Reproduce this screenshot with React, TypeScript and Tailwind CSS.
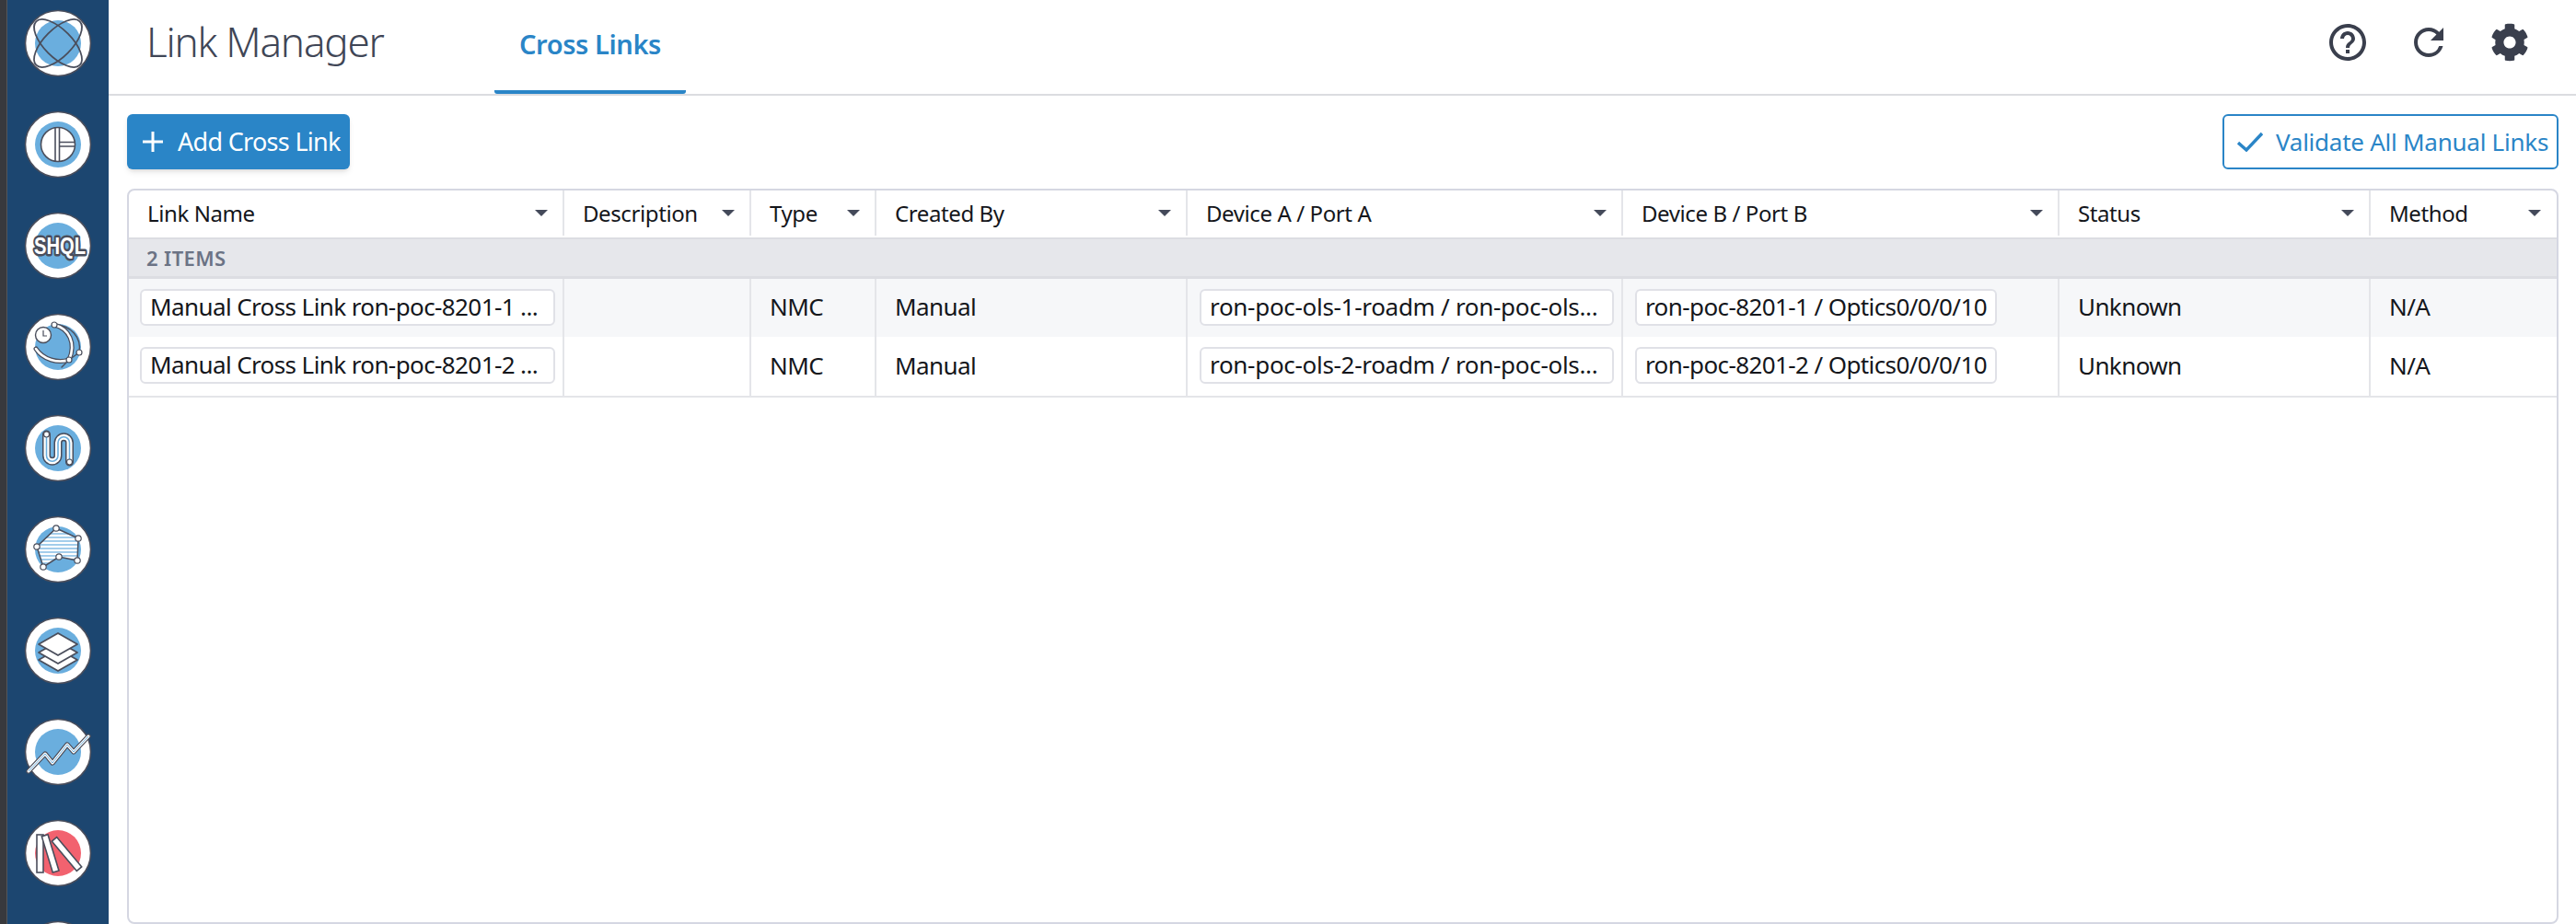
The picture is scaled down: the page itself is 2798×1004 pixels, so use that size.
import { FaCog } from "react-icons/fa"
import { MdHelpOutline, MdRefresh } from "react-icons/md"
import type { ReactNode } from "react"

const DARK = "#4a4e5c"
const BLUE = "#6aaede"

const COLUMNS = [
  "Link Name",
  "Description",
  "Type",
  "Created By",
  "Device A / Port A",
  "Device B / Port B",
  "Status",
  "Method",
]

const ROWS = [
  {
    name: "Manual Cross Link ron-poc-8201-1 ...",
    type: "NMC",
    by: "Manual",
    a: "ron-poc-ols-1-roadm / ron-poc-ols...",
    b: "ron-poc-8201-1 / Optics0/0/0/10",
    status: "Unknown",
    method: "N/A",
  },
  {
    name: "Manual Cross Link ron-poc-8201-2 ...",
    type: "NMC",
    by: "Manual",
    a: "ron-poc-ols-2-roadm / ron-poc-ols...",
    b: "ron-poc-8201-2 / Optics0/0/0/10",
    status: "Unknown",
    method: "N/A",
  },
]

function Badge({ children, fill = BLUE, r = 25 }: { children?: ReactNode; fill?: string; r?: number }) {
  return (
    <svg viewBox="-38 -38 76 76" className="w-[76px] h-[76px] shrink-0 overflow-visible">
      <circle r="35.5" fill="#fff" stroke={DARK} strokeWidth="1.6" />
      <circle r={r} fill={fill} />
      {children}
    </svg>
  )
}

function NavIcons() {
  return (
    <>
      <Badge>
        <g fill="none" stroke={DARK} strokeWidth="1.8">
          <ellipse rx="33.5" ry="15" transform="rotate(45)" />
          <ellipse rx="33.5" ry="15" transform="rotate(-45)" />
        </g>
      </Badge>
      <Badge>
        <circle r="18.5" fill="#fff" stroke={DARK} strokeWidth="1.6" />
        <path d="M-3 -18 V18 M1.5 -18 V18 M1.5 -2.5 H18 M1.5 2 H18" stroke={DARK} strokeWidth="1.6" fill="none" />
      </Badge>
      <Badge>
        <path d="M9 10 L14 16 L19 10 Z" fill={DARK} />
        <text
          x="2"
          y="9"
          textAnchor="middle"
          fontFamily="'Liberation Sans', sans-serif"
          fontWeight="700"
          fontSize="25"
          textLength="56"
          lengthAdjust="spacingAndGlyphs"
          fill="#fff"
          stroke={DARK}
          strokeWidth="5"
          strokeLinejoin="round"
          paintOrder="stroke"
        >
          SHQL
        </text>
      </Badge>
      <Badge>
        <g fill="none" strokeLinecap="round">
          <path d="M-4 -24 C14 -24 26 -10 23 6" stroke={DARK} strokeWidth="1.4" />
          <path d="M23 6 L12 14 L4 22" stroke={DARK} strokeWidth="1.4" />
          <path d="M-4 -24 C12 -20 20 -4 12 14" stroke={DARK} strokeWidth="5" />
          <path d="M-4 -24 C12 -20 20 -4 12 14" stroke="#fff" strokeWidth="2.6" />
          <path d="M-24 2 C-16 14 0 18 12 14" stroke={DARK} strokeWidth="5" />
          <path d="M-24 2 C-16 14 0 18 12 14" stroke="#fff" strokeWidth="2.6" />
        </g>
        <circle cx="-16" cy="-13" r="8.5" fill="#fff" stroke={DARK} strokeWidth="1.4" />
        <path d="M-16 -18 V-12 H-12" fill="none" stroke={DARK} strokeWidth="1.2" />
        <circle cx="-4" cy="-24" r="3" fill="#fff" stroke={DARK} strokeWidth="1.2" />
        <circle cx="23" cy="6" r="3" fill="#fff" stroke={DARK} strokeWidth="1.2" />
        <circle cx="12" cy="14" r="3" fill="#fff" stroke={DARK} strokeWidth="1.2" />
      </Badge>
      <Badge>
        <g fill="none" strokeLinecap="round">
          <path d="M-12.5 -15 V8 a6.25 6.25 0 0 0 12.5 0 V-6 a6.25 6.25 0 0 1 12.5 0 V15" stroke={DARK} strokeWidth="9" />
          <path d="M-12.5 -15 V8 a6.25 6.25 0 0 0 12.5 0 V-6 a6.25 6.25 0 0 1 12.5 0 V15" stroke="#fff" strokeWidth="6" />
          <path d="M-12.5 -15 V8 a6.25 6.25 0 0 0 12.5 0 V-6 a6.25 6.25 0 0 1 12.5 0 V15" stroke={BLUE} strokeWidth="1.6" />
        </g>
        <circle cx="-12.5" cy="-15" r="3" fill="#fff" stroke={DARK} strokeWidth="1.2" />
        <circle cx="12.5" cy="15" r="3" fill="#fff" stroke={DARK} strokeWidth="1.2" />
      </Badge>
      <Badge>
        <defs>
          <pattern id="stripes" width="4" height="4" patternUnits="userSpaceOnUse">
            <rect width="4" height="2.2" fill="#fff" />
            <rect y="2.2" width="4" height="1.8" fill="#a6cfec" />
          </pattern>
        </defs>
        <path d="M-2 -23 L22 -12 L21 12 L1 8 L-16 19 L-23 -3 Z" fill="url(#stripes)" stroke={DARK} strokeWidth="1.5" />
        {[[-2, -23], [22, -12], [21, 12], [1, 8], [-16, 19], [-23, -3]].map(([x, y]) => (
          <circle key={`${x}${y}`} cx={x} cy={y} r="3.2" fill="#fff" stroke={DARK} strokeWidth="1.2" />
        ))}
      </Badge>
      <Badge>
        <g fill="#fff" stroke={DARK} strokeWidth="1.8" strokeLinejoin="round">
          <path d="M0 -2 L21 10 L0 22 L-21 10 Z" />
          <path d="M0 -10 L21 2 L0 14 L-21 2 Z" />
          <path d="M0 -19 L21 -7 L0 5 L-21 -7 Z" />
        </g>
      </Badge>
      <Badge>
        <path d="M-32 21 L-14 2 L-6 12 L10 -8 L17 0 L33 -17" fill="none" stroke={DARK} strokeWidth="5.4" strokeLinecap="round" strokeLinejoin="round" />
        <path d="M-32 21 L-14 2 L-6 12 L10 -8 L17 0 L33 -17" fill="none" stroke="#fff" strokeWidth="3" strokeLinecap="round" strokeLinejoin="round" />
        <path d="M-32 21 L-14 2 L-6 12 L10 -8 L17 0 L33 -17" fill="none" stroke={BLUE} strokeWidth="1" />
      </Badge>
      <Badge fill="#f2626f">
        <g fill="#fff" stroke={DARK} strokeWidth="1.6">
          <rect x="-23" y="-20" width="7" height="41" />
          <rect x="-12" y="-20" width="7" height="41" transform="rotate(-17 -8.5 0)" />
          <rect x="-3.5" y="-21" width="7" height="42" transform="translate(9.5 1) rotate(-40)" />
        </g>
      </Badge>
      <Badge />
    </>
  )
}

function Caret() {
  return <span className="w-0 h-0 border-x-[7px] border-x-transparent border-t-[7px] border-t-[#444a5a] shrink-0" />
}

function Chip({ children, className = "" }: { children: ReactNode; className?: string }) {
  return (
    <span className={`block w-full h-10 px-[9px] border-2 border-[#e0e1e7] rounded-md bg-white leading-[35px] whitespace-nowrap overflow-hidden ${className}`}>
      {children}
    </span>
  )
}

const GRID = "grid grid-cols-[473px_203px_136px_338px_473px_474px_338px_201px]"
const CELL = "border-r-2 border-[#e4e5e9] last:border-r-0 flex items-center"

export default function App() {
  return (
    <div className="w-[2798px] h-[1004px] flex overflow-hidden bg-white font-['Noto_Sans',sans-serif] text-[#14161b]">
      <div className="w-[8px] bg-[#38393d] border-r border-[#55565a] shrink-0" />
      <nav className="w-[110px] bg-[#1c4670] shrink-0 flex flex-col items-center gap-[34px] pt-[9px]">
        <NavIcons />
      </nav>
      <main className="flex-1 min-w-0 flex flex-col">
        <header className="h-[104px] shrink-0 border-b-2 border-[#dbdce0] flex items-start">
          <h1 className="ml-[41px] mt-[13px] w-[378px] text-[44px] leading-[64px] font-light text-[#3f4656] tracking-[-1.2px]">Link Manager</h1>
          <div className="h-[102px] w-[208px] border-b-4 border-[#2a85c7] rounded-b-[3px] flex justify-center pt-[26px] text-[29px] leading-[44px] font-semibold text-[#2a85c7] tracking-[-0.4px]">
            Cross Links
          </div>
          <div className="ml-auto mr-[48px] mt-[22px] flex items-center gap-[40px] text-[#3a3f4d]">
            <MdHelpOutline className="w-12 h-12" />
            <MdRefresh className="w-12 h-12" />
            <span className="w-12 h-12 flex items-center justify-center">
              <FaCog className="w-[42px] h-[42px]" />
            </span>
          </div>
        </header>

        <div className="flex-1 min-h-0 flex flex-col pl-5 pr-[19px]">
          <div className="h-[101px] shrink-0 pt-5 pb-[21px] flex items-start justify-between">
            <button className="h-[60px] w-[242px] bg-[#2a85c7] rounded-md shadow-md text-white flex items-center pl-[16px] gap-[15px] text-[27px] tracking-[-0.7px]">
              <svg viewBox="0 0 24 24" className="w-[24px] h-[24px]" stroke="#fff" strokeWidth="3" fill="none">
                <path d="M12 1 V23 M1 12 H23" />
              </svg>
              Add Cross Link
            </button>
            <button className="h-[60px] w-[365px] border-2 border-[#2a85c7] rounded-md text-[#2a85c7] flex items-center pl-[14px] gap-[14px] text-[26px] tracking-[-0.25px]">
              <svg viewBox="0 0 28 22" className="w-[28px] h-[22px]" stroke="#2a85c7" strokeWidth="3.4" fill="none">
                <path d="M1 12 L10 20 L27 2" />
              </svg>
              Validate All Manual Links
            </button>
          </div>

          <div className="h-[799px] shrink-0 border-2 border-[#d5d7e2] rounded-lg overflow-hidden text-[26px] tracking-[-0.6px]">
            <div className={`${GRID} h-[53px] border-b-2 border-[#dcdde2] text-[24px] tracking-[-0.4px] pb-[2px]`}>
              {COLUMNS.map(col => (
                <div key={col} className={`${CELL} justify-between pl-5 pr-[16px]`}>
                  <span>{col}</span>
                  <Caret />
                </div>
              ))}
            </div>
            <div className="h-[43px] bg-[#e6e7eb] border-b-[3px] border-[#dcdde2] flex items-center pl-[19px] text-[22px] font-semibold text-[#6b7385] tracking-[0.4px]">
              2 ITEMS
            </div>
            {ROWS.map((row, i) => (
              <div key={row.name} className={`${GRID} ${i === 0 ? "h-[63px] bg-[#f6f7f9]" : "h-[66px] border-b-2 border-[#e4e5e9]"}`}>
                <div className={`${CELL} pl-3 pr-2 pb-[2px]`}><Chip>{row.name}</Chip></div>
                <div className={CELL} />
                <div className={`${CELL} pl-5 pb-[2px]`}>{row.type}</div>
                <div className={`${CELL} pl-5 pb-[2px]`}>{row.by}</div>
                <div className={`${CELL} pl-[13px] pr-2 pb-[2px]`}><Chip className="tracking-[-0.3px]">{row.a}</Chip></div>
                <div className={`${CELL} pl-[13px] pr-[66px] pb-[2px]`}><Chip>{row.b}</Chip></div>
                <div className={`${CELL} pl-5 pb-[2px]`}>{row.status}</div>
                <div className={`${CELL} pl-5 pb-[2px]`}>{row.method}</div>
              </div>
            ))}
          </div>
        </div>
      </main>
    </div>
  )
}
